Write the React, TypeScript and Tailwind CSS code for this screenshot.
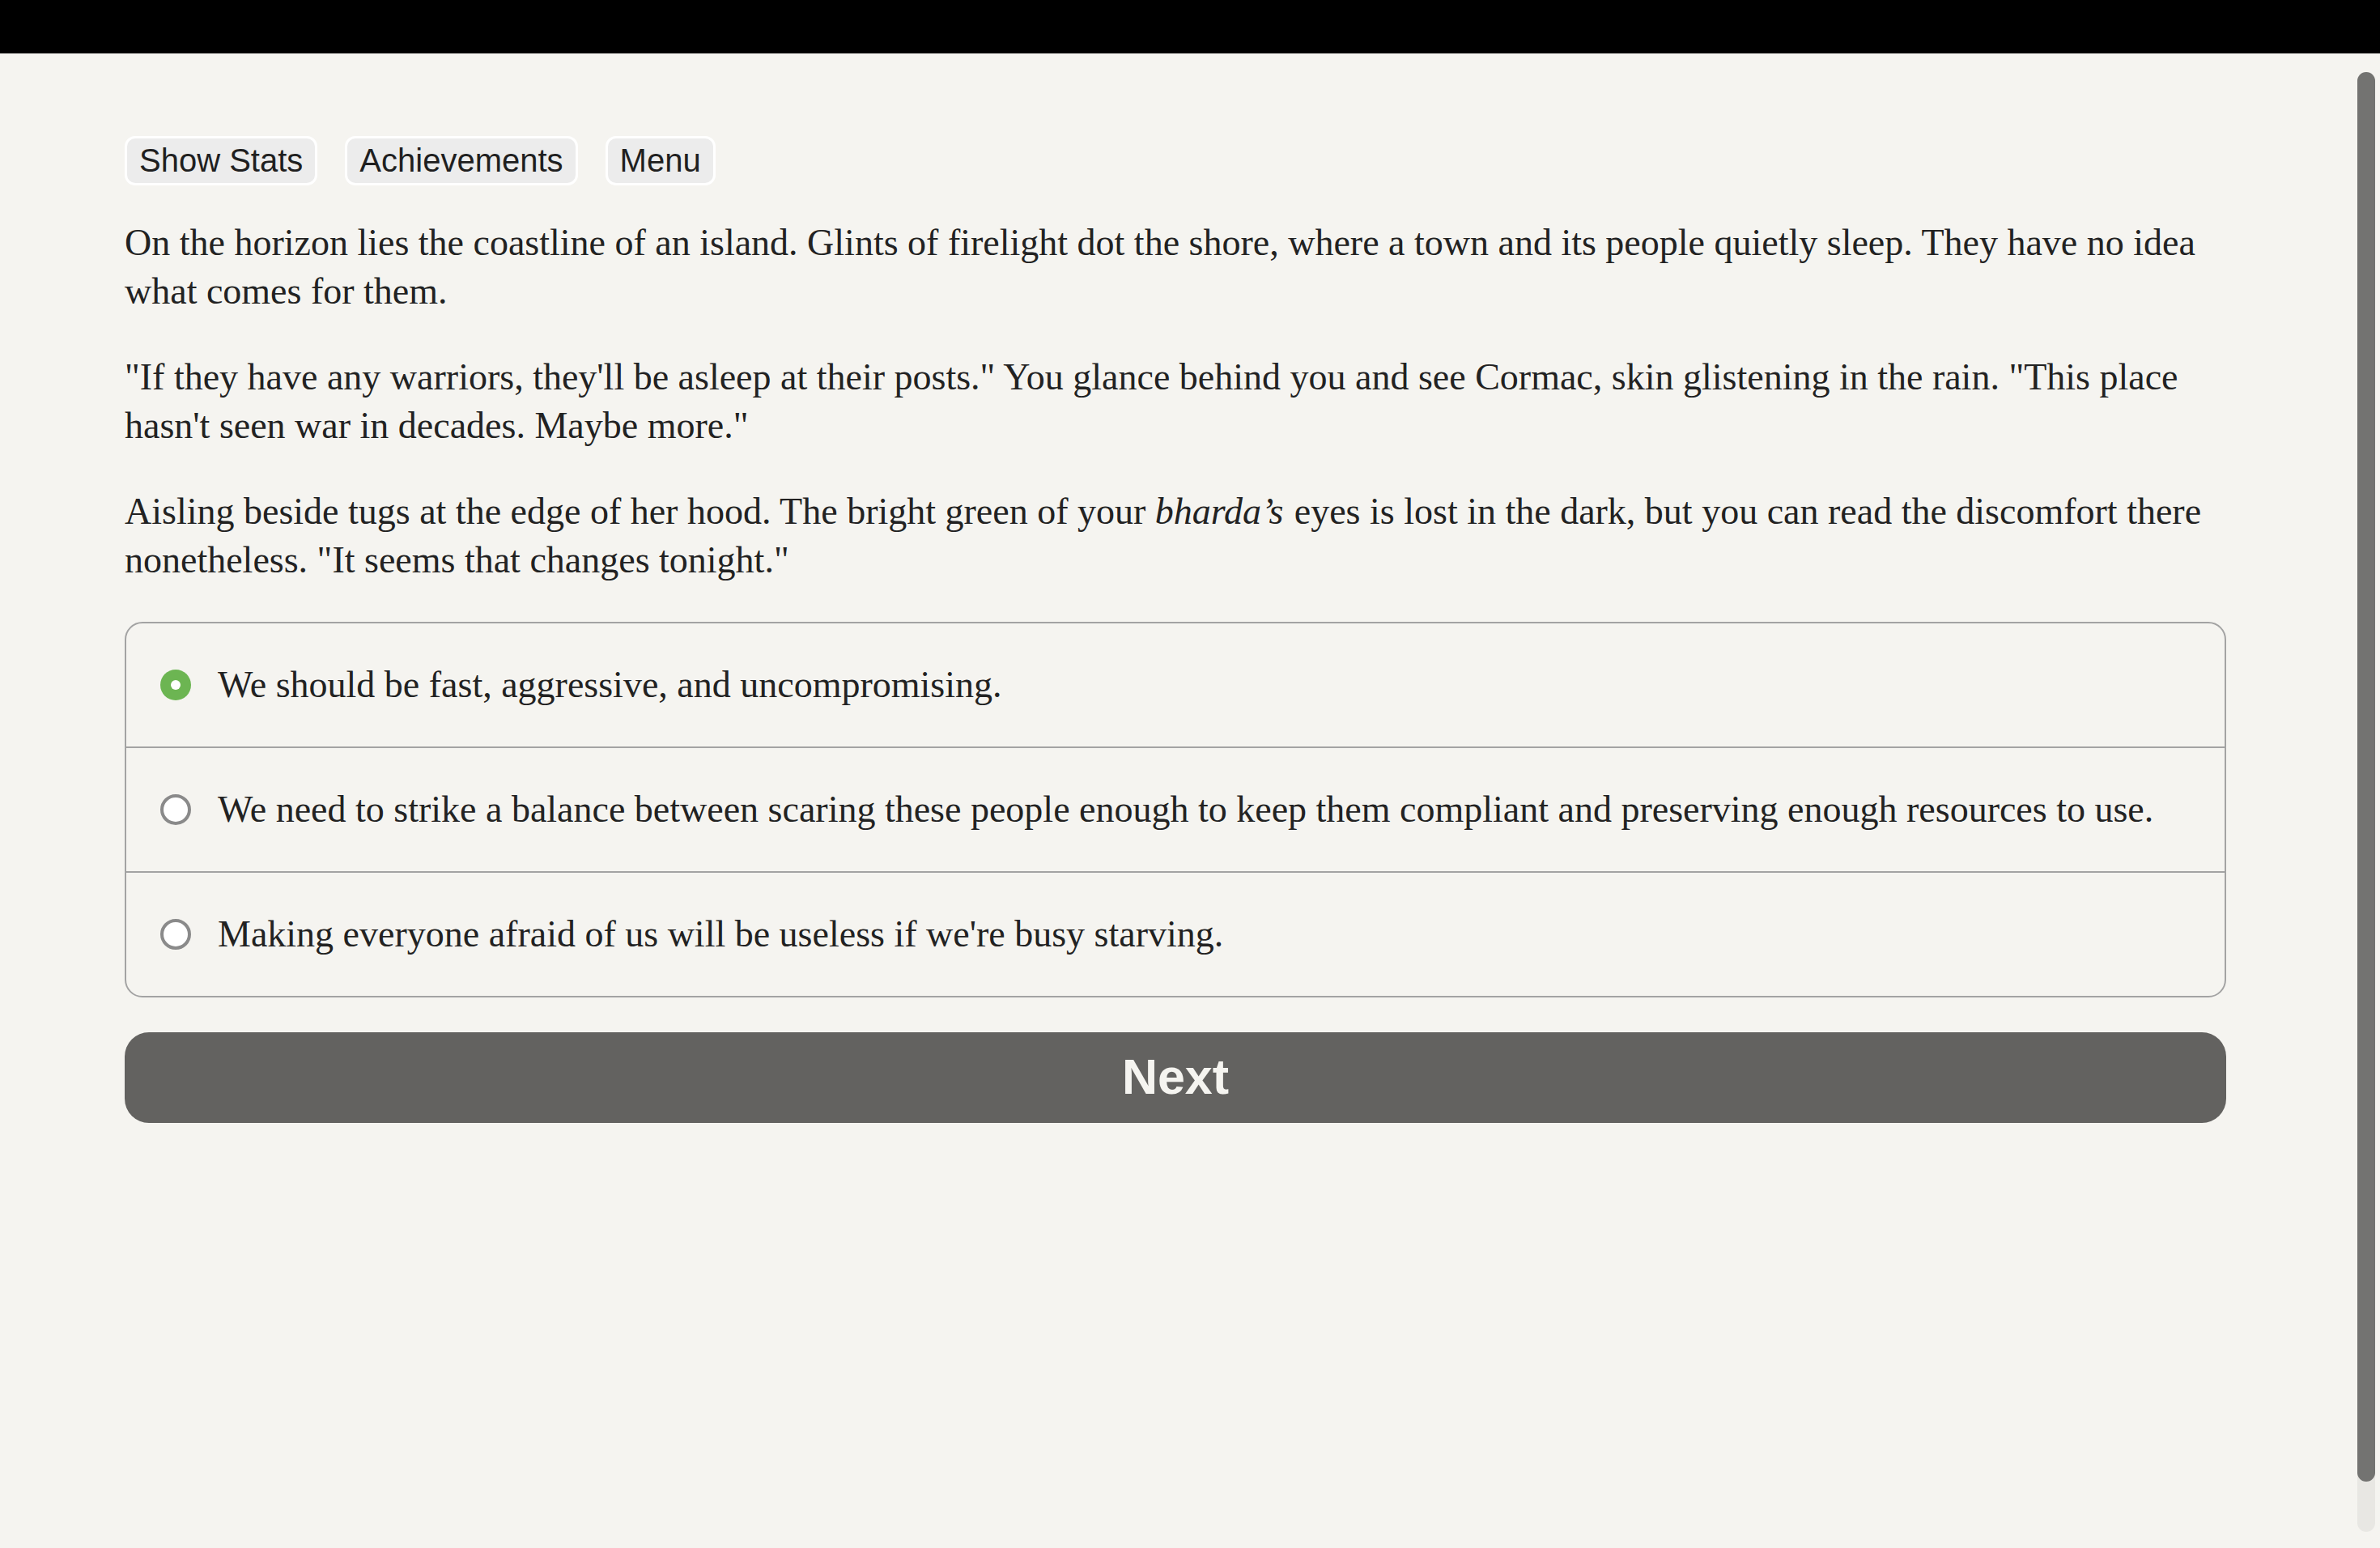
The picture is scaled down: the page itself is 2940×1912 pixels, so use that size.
const options = [
  "We should be fast, aggressive, and uncompromising.",
  "We need to strike a balance between scaring these people enough to keep them compliant and preserving enough resources to use.",
  "Making everyone afraid of us will be useless if we're busy starving.",
];

function Radio({ checked }: { checked: boolean }) {
  if (checked) {
    return (
      <span className="flex h-[38px] w-[38px] shrink-0 items-center justify-center rounded-full bg-[#6cb552]">
        <span className="h-[12px] w-[12px] rounded-full bg-white" />
      </span>
    );
  }
  return (
    <span className="h-[38px] w-[38px] shrink-0 rounded-full border-[4px] border-[#8a8a8a] bg-white" />
  );
}

export default function App() {
  const selected = 0;

  return (
    <div className="relative min-h-screen overflow-hidden bg-[#f5f4f0] font-['Liberation_Serif',serif] text-[#222]">
      <div className="h-[66px] bg-black" />

      <main className="ml-[154px] w-[2596px] pt-[102px]">
        <div className="flex gap-[34px] font-['Liberation_Sans',Arial,sans-serif] text-[40px] text-[#1f1f1f]">
          {["Show Stats", "Achievements", "Menu"].map((b) => (
            <button
              key={b}
              className="rounded-[13px] border-[3px] border-white bg-[#ececec] px-[15px] py-[4px] leading-[47px]"
            >
              {b}
            </button>
          ))}
        </div>

        <div className="mt-[41px] text-[46px] leading-[60px]">
          <p className="mb-[46px]">
            On the horizon lies the coastline of an island. Glints of firelight dot the shore, where a town
            and its people quietly sleep. They have no idea what comes for them.
          </p>
          <p className="mb-[46px]">
            "If they have any warriors, they'll be asleep at their posts." You glance behind you and see
            Cormac, skin glistening in the rain. "This place hasn't seen war in decades. Maybe more."
          </p>
          <p>
            Aisling beside tugs at the edge of her hood. The bright green of your{" "}
            <i className="pr-[2px]">bharda’s</i> eyes is lost in the dark, but you can read the discomfort
            there nonetheless. "It seems that changes tonight."
          </p>
        </div>

        <div className="mt-[46px] overflow-hidden rounded-[22px] border-2 border-[#a3a3a3] text-[46px] leading-[60px]">
          {options.map((o, i) => (
            <div
              key={i}
              className={`flex items-center gap-[33px] py-[46px] pl-[42px] pr-[40px] ${
                i > 0 ? "border-t-2 border-[#a3a3a3]" : ""
              }`}
            >
              <Radio checked={i === selected} />
              <span>{o}</span>
            </div>
          ))}
        </div>

        <button className="mt-[43px] flex h-[112px] w-full items-center justify-center rounded-[30px] bg-[#636260] font-['Liberation_Sans',Arial,sans-serif] text-[61px] font-bold text-[#f5f4f0]">
          Next
        </button>
      </main>

      {/* overlay scrollbar */}
      <div className="absolute top-[89px] right-[6px] h-[1803px] w-[22px] rounded-full bg-[#e8e7e3]">
        <div className="h-[1741px] w-full rounded-full bg-[#737371]" />
      </div>
    </div>
  );
}
